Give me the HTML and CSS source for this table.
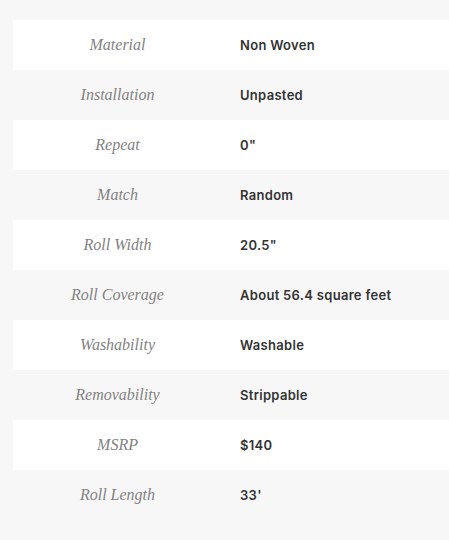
FILE: index.html
```html
<!DOCTYPE html>
<html>
<head>
<meta charset="utf-8">
<link rel="stylesheet" href="styles.css">
</head>
<body>
<div class="specs">
  <div class="row"><div class="label">Material</div><div class="value">Non Woven</div></div>
  <div class="row"><div class="label">Installation</div><div class="value">Unpasted</div></div>
  <div class="row"><div class="label">Repeat</div><div class="value">0"</div></div>
  <div class="row"><div class="label">Match</div><div class="value">Random</div></div>
  <div class="row"><div class="label">Roll Width</div><div class="value">20.5"</div></div>
  <div class="row"><div class="label">Roll Coverage</div><div class="value">About 56.4 square feet</div></div>
  <div class="row"><div class="label">Washability</div><div class="value">Washable</div></div>
  <div class="row"><div class="label">Removability</div><div class="value">Strippable</div></div>
  <div class="row"><div class="label">MSRP</div><div class="value">$140</div></div>
  <div class="row"><div class="label">Roll Length</div><div class="value">33'</div></div>
</div>
</body>
</html>
```
FILE: styles.css
```css
html, body {
  margin: 0;
  padding: 0;
  background: #f7f7f7;
}
body {
  padding: 20px 0 0 13px;
}
.specs {
  display: flex;
  flex-direction: column;
}
.row {
  display: flex;
  align-items: center;
  height: 50px;
}
.row:nth-child(odd) {
  background: #ffffff;
}
.label {
  width: 209px;
  text-align: center;
  font-family: "Liberation Serif", serif;
  font-style: italic;
  font-size: 16px;
  color: #828282;
}
.value {
  padding-left: 18px;
  font-family: "Inter", sans-serif;
  font-weight: 600;
  font-size: 13px;
  letter-spacing: 0.3px;
  color: #333333;
}
```
